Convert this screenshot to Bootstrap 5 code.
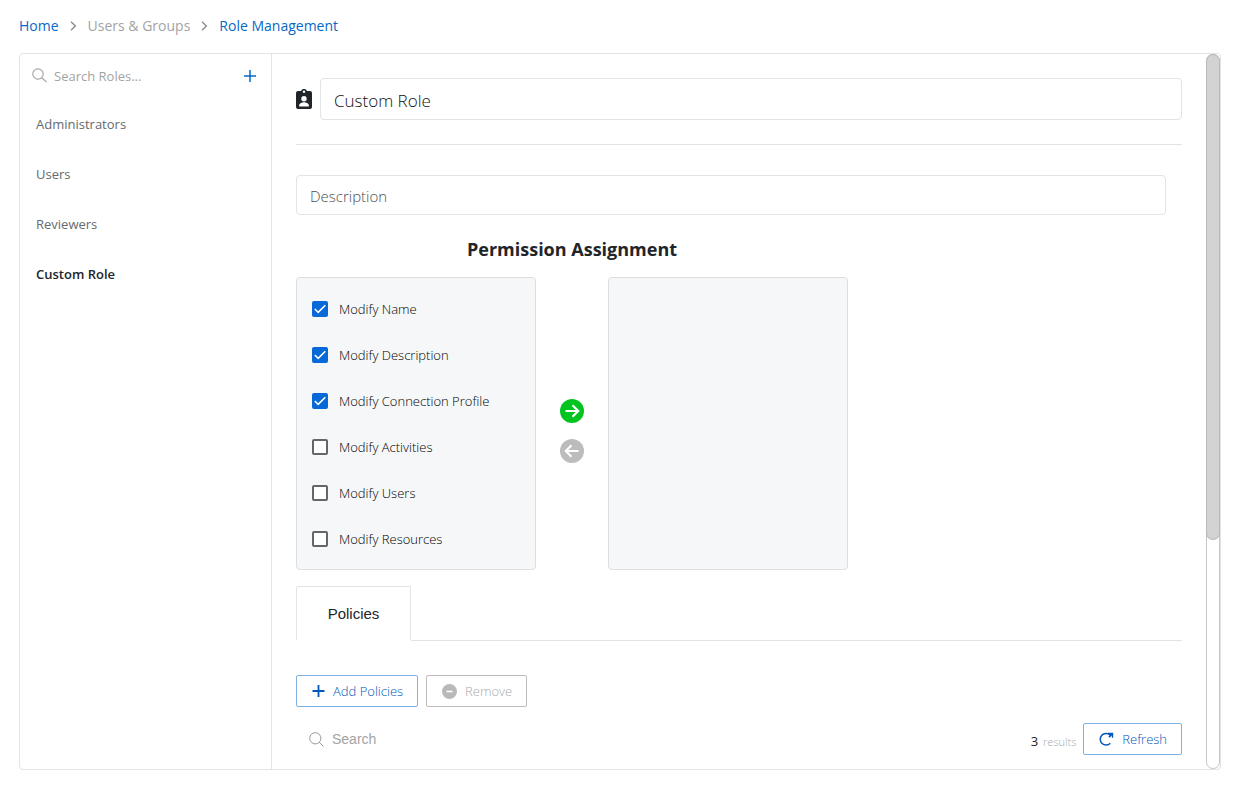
<!DOCTYPE html>
<html lang="en">
<head>
<meta charset="utf-8">
<meta name="viewport" content="width=device-width, initial-scale=1">
<title>Role Management</title>
<link href="https://cdn.jsdelivr.net/npm/bootstrap@5.3.0/dist/css/bootstrap.min.css" rel="stylesheet">
<style>
  :root { --line: #e1e3e5; --blue: #0768c6; --muted: #a3a3a3; --ink: #212529; }
  body { font-family: "Open Sans", "Noto Sans", sans-serif; font-size: 13px; line-height: 20px; color: var(--ink); background: #fff; }
  a { text-decoration: none; color: var(--blue); }
  svg { display: block; flex: none; }
  .page { min-height: 100vh; padding: 16px 24px 16px 19px; }
  .crumbs { font-size: 14px; gap: 11px; margin-bottom: 17px; color: var(--muted); }
  .panel { border: 1px solid var(--line); border-radius: 4px; }
  .roles { width: 252px; flex: none; border-right: 1px solid var(--line); }
  .roles-search { padding: 12px 11px 0 12px; gap: 6px; height: 44px; }
  .plain-input { border: 0; padding: 0; background: transparent; outline: 0; min-width: 0; }
  .plain-input::placeholder { color: var(--muted); opacity: 1; }
  .roles-list a { display: block; padding: 16px 16px 14px; color: #666a6e; }
  .roles-list a.current { color: var(--ink); font-weight: 600; }
  .detail { padding: 24px 24px 14px; min-width: 0; }
  .form-control { border-color: var(--line); color: #111; padding: 2px 13px 0; border-radius: 4px; font-weight: 300; }
  .role-name { height: 42px; font-size: 17px; }
  .role-text { height: 40px; font-size: 15px; }
  .form-control::placeholder { color: #4c4f52; }
  .rule { border-top: 1px solid var(--line); margin: 24px 0 30px; }
  .assign { width: 552px; }
  .assign h2 { font-size: 18px; line-height: 24px; font-weight: 700; margin: 22px 0 16px; }
  .perm-box { width: 240px; background: #f5f7f9; border: 1px solid #dbdfe2; border-radius: 4px; padding: 21px 15px 20px; }
  .perm-box .stack { gap: 26px; }
  .perm { gap: 11px; color: #000; font-weight: 300; }
  .perm input { appearance: none; width: 16px; height: 16px; margin: 0; border: 2px solid #63676b; border-radius: 2px; background: #fff; flex: none; }
  .perm input:checked { border-color: #0768d8; background: #0768d8 url("data:image/svg+xml,%3Csvg xmlns='http://www.w3.org/2000/svg' viewBox='0 0 12 12'%3E%3Cpath d='M.8 6l3.4 3.400L11.300 2.300' fill='none' stroke='%23fff' stroke-width='1.600'/%3E%3C/svg%3E") center / 12px 12px no-repeat; }
  .move { gap: 16px; padding-top: 15px; }
  .icon-btn { border: 0; padding: 0; background: transparent; color: var(--blue); }
  .tab-row { margin-top: 16px; }
  .tab-btn { width: 115px; height: 54px; border: 1px solid var(--line); border-bottom: 0; border-radius: 2px 0 0; background: #fff; font: 15px/20px "Liberation Sans", sans-serif; color: var(--ink); }
  .tab-fill { border-bottom: 1px solid var(--line); height: 55px; }
  .actions { margin-top: 34px; gap: 8px; }
  .tool-btn { --bs-btn-font-size: 13px; --bs-btn-line-height: 20px; --bs-btn-padding-x: 15px; --bs-btn-padding-y: 5px; --bs-btn-border-radius: 2px; --bs-btn-color: #0057bb; --bs-btn-border-color: #7fb2e4; --bs-btn-disabled-color: #aaa; --bs-btn-disabled-border-color: #bcbcbc; --bs-btn-disabled-opacity: 1; white-space: nowrap; padding-right: 14px; font-weight: 300; }
  .results { margin-top: 16px; padding-left: 13px; }
  .results-search { font: 14px/20px "Liberation Sans", sans-serif; }
  .count { gap: 5px; margin-right: 7px; padding-top: 4px; }
  .count small { font-size: 11px; color: #a8a8a8; font-weight: 300; }
  .track { width: 14px; flex: none; border: 1px solid #c6c6c6; border-radius: 7px; }
  .thumb { width: 100%; height: 484px; max-height: 100%; border-radius: 7px; background: #d3d3d3; box-shadow: 0 0 0 1px #b9b9b9; }
</style>
</head>
<body>
<div class="page d-flex flex-column">
  <nav class="crumbs d-flex align-items-center" aria-label="Breadcrumb">
    <a href="#">Home</a>
    <svg width="7" height="10" viewBox="0 0 7 10" fill="none" stroke="#888" stroke-width="1.3"><path d="M1 .8l4.400 4.200L1 9.200"/></svg>
    <span>Users &amp; Groups</span>
    <svg width="7" height="10" viewBox="0 0 7 10" fill="none" stroke="#888" stroke-width="1.3"><path d="M1 .8l4.400 4.200L1 9.200"/></svg>
    <a href="#" aria-current="page">Role Management</a>
  </nav>

  <div class="panel d-flex flex-grow-1">
    <aside class="roles">
      <div class="roles-search d-flex align-items-start">
        <svg width="16" height="18" viewBox="0 0 16 18" fill="none" stroke="#a9a9a9" stroke-width="1.200"><circle cx="6" cy="8" r="5.200"/><path d="M9.800 11.800l4.700 4.200"/></svg>
        <input class="plain-input flex-grow-1" type="search" placeholder="Search Roles..." aria-label="Search roles">
        <button class="icon-btn mt-1" type="button" aria-label="Add role"><svg width="20" height="12" viewBox="0 0 20 12" stroke="currentColor" stroke-width="1.500"><path d="M4 6h12M10 0v12"/></svg></button>
      </div>
      <nav class="roles-list" aria-label="Roles">
        <a href="#">Administrators</a>
        <a href="#">Users</a>
        <a href="#">Reviewers</a>
        <a href="#" class="current">Custom Role</a>
      </nav>
    </aside>

    <main class="detail flex-grow-1">
      <div class="d-flex align-items-center gap-2">
        <svg width="16" height="22" viewBox="0 0 16 22"><path fill="#212529" d="M2 3h3a3.200 3.200 0 0 1 6 0h3a2 2 0 0 1 2 2v14a2 2 0 0 1-2 2H2a2 2 0 0 1-2-2V5a2 2 0 0 1 2-2z"/><circle cx="8" cy="3.700" r="1.200" fill="#fff"/><circle cx="8" cy="10.700" r="2.700" fill="#fff"/><path fill="#fff" d="M3.200 18.500v-1.300c0-2 3-3 4.800-3s4.800 1 4.800 3v1.300z"/></svg>
        <input class="form-control role-name" type="text" value="Custom Role" aria-label="Role name">
      </div>
      <div class="rule"></div>
      <div class="pe-3"><input class="form-control role-text" type="text" placeholder="Description" aria-label="Description"></div>

      <section class="assign">
        <h2 class="text-center">Permission Assignment</h2>
        <div class="d-flex justify-content-between">
          <div class="perm-box">
            <div class="stack d-flex flex-column">
              <label class="perm d-flex align-items-center"><input type="checkbox" checked>Modify Name</label>
              <label class="perm d-flex align-items-center"><input type="checkbox" checked>Modify Description</label>
              <label class="perm d-flex align-items-center"><input type="checkbox" checked>Modify Connection Profile</label>
              <label class="perm d-flex align-items-center"><input type="checkbox">Modify Activities</label>
              <label class="perm d-flex align-items-center"><input type="checkbox">Modify Users</label>
              <label class="perm d-flex align-items-center"><input type="checkbox">Modify Resources</label>
            </div>
          </div>
          <div class="move d-flex flex-column justify-content-center">
            <button class="icon-btn" type="button" aria-label="Assign"><svg width="24" height="24" viewBox="0 0 24 24"><circle cx="12" cy="12" r="12" fill="#00c520"/><path d="M5.500 12h12M12.500 6.300l5.700 5.700-5.700 5.700" fill="none" stroke="#fff" stroke-width="2.200"/></svg></button>
            <button class="icon-btn" type="button" aria-label="Unassign" disabled><svg width="24" height="24" viewBox="0 0 24 24"><circle cx="12" cy="12" r="12" fill="#bcbcbc"/><path d="M18.500 12h-12M11.500 6.300L5.800 12l5.700 5.700" fill="none" stroke="#fff" stroke-width="2.200"/></svg></button>
          </div>
          <div class="perm-box"></div>
        </div>
      </section>

      <div class="tab-row d-flex" role="tablist">
        <button class="tab-btn" type="button" role="tab" aria-selected="true">Policies</button>
        <div class="tab-fill flex-grow-1"></div>
      </div>

      <div class="actions d-flex">
        <button class="btn tool-btn d-flex align-items-center gap-2" type="button"><svg width="13" height="12" viewBox="0 0 13 12" stroke="currentColor" stroke-width="1.800"><path d="M.5 6h12M6.500 0v12"/></svg>Add Policies</button>
        <button class="btn tool-btn d-flex align-items-center gap-2" type="button" disabled><svg width="15" height="15" viewBox="0 0 15 15"><circle cx="7.500" cy="7.500" r="7.500" fill="#b9b9b9"/><path d="M4.500 7.500h6" stroke="#fff" stroke-width="1.600"/></svg>Remove</button>
      </div>

      <div class="results d-flex align-items-center">
        <svg width="15" height="15" viewBox="0 0 15 15" fill="none" stroke="#999" stroke-width="1"><circle cx="6.300" cy="6.300" r="5.600"/><path d="M10.300 10.300l4 4"/></svg>
        <input class="plain-input results-search flex-grow-1 ms-2" type="search" placeholder="Search" aria-label="Search policies">
        <div class="count d-flex align-items-baseline"><span>3</span><small>results</small></div>
        <button class="btn tool-btn d-flex align-items-center gap-2" type="button"><svg width="15" height="14" viewBox="0 0 15 14"><path d="M11 3A5.800 5.800 0 1 0 11.300 11.200" fill="none" stroke="currentColor" stroke-width="1.500"/><path d="M9 .8h5.200v5h-1.400V3.600L10.600 5.800 9.400 4.600 11.400 2.300H9z" fill="currentColor"/></svg>Refresh</button>
      </div>
    </main>

    <div class="track" aria-hidden="true"><div class="thumb"></div></div>
  </div>
</div>
<script src="https://cdn.jsdelivr.net/npm/bootstrap@5.3.0/dist/js/bootstrap.bundle.min.js"></script>
</body>
</html>
